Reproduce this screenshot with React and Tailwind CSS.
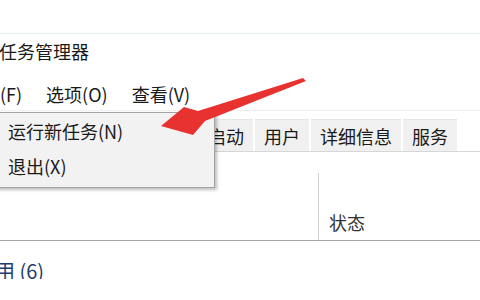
import React from "react";

const font = { fontFamily: '"Noto Sans CJK SC", "Noto Sans", sans-serif' };

export default function App() {
  const tabs = ["启动", "用户", "详细信息", "服务"];

  return (
    <div
      className="relative w-[480px] h-[300px] overflow-hidden bg-white text-[#1a1a1a]"
      style={font}
    >
      {/* top blank strip */}
      <div className="h-[34px] border-b border-[#e4f3f6]" />

      {/* title */}
      <div className="h-[46px] pt-[6px] text-[18px] leading-[22px] -ml-[1px]">
        任务管理器
      </div>

      {/* menu bar */}
      <div className="h-[31px] flex items-start gap-[24px] text-[18px] leading-[22px] pt-[3px] border-b border-[#f0f0f0]">
        <span>(F)</span>
        <span>选项(O)</span>
        <span>查看(V)</span>
      </div>

      {/* tabs */}
      <div className="h-[41px] pt-[8px] border-b border-[#d6d6d6] flex items-end">
        <div className="flex gap-[2px] ml-[199px] h-[32px]">
          {tabs.map((t) => (
            <div
              key={t}
              className="bg-[#f0f0f0] px-[9px] text-[18px] leading-[32px] border-t border-[#e6e6e6]"
            >
              {t}
            </div>
          ))}
        </div>
      </div>

      {/* column header */}
      <div className="h-[89px] border-b border-[#a6a6a6] flex">
        <div className="w-[318px]" />
        <div className="mt-[21px] border-l border-[#cfcfcf] pl-[10px] pt-[38px] text-[18px] leading-[22px] text-[#333]">
          状态
        </div>
      </div>

      {/* group row */}
      <div className="h-[38px] overflow-hidden pt-[18px]">
        <div className="h-[21px] overflow-hidden text-[20px] leading-[24px] text-[#1f3b6b] -ml-[5px]">
          用 (6)
        </div>
      </div>

      {/* dropdown menu */}
      <div className="absolute left-[-6px] top-[112px] w-[221px] h-[76px] bg-[#f2f2f2] border border-[#a3a3a3] shadow-[2px_2px_3px_rgba(0,0,0,0.25)] text-[18px] leading-[22px]">
        <div className="pl-[13px] pt-[7px] h-[36px]">运行新任务(N)</div>
        <div className="pl-[13px] pt-[6px]">退出(X)</div>
      </div>

      {/* red arrow */}
      <svg
        className="absolute left-0 top-0 pointer-events-none"
        width="480"
        height="300"
        viewBox="0 0 480 300"
      >
        <polygon
          points="161,126 184,107 198,111 303,78 306,81 205,121 193,135"
          fill="#e8322f"
        />
      </svg>
    </div>
  );
}
